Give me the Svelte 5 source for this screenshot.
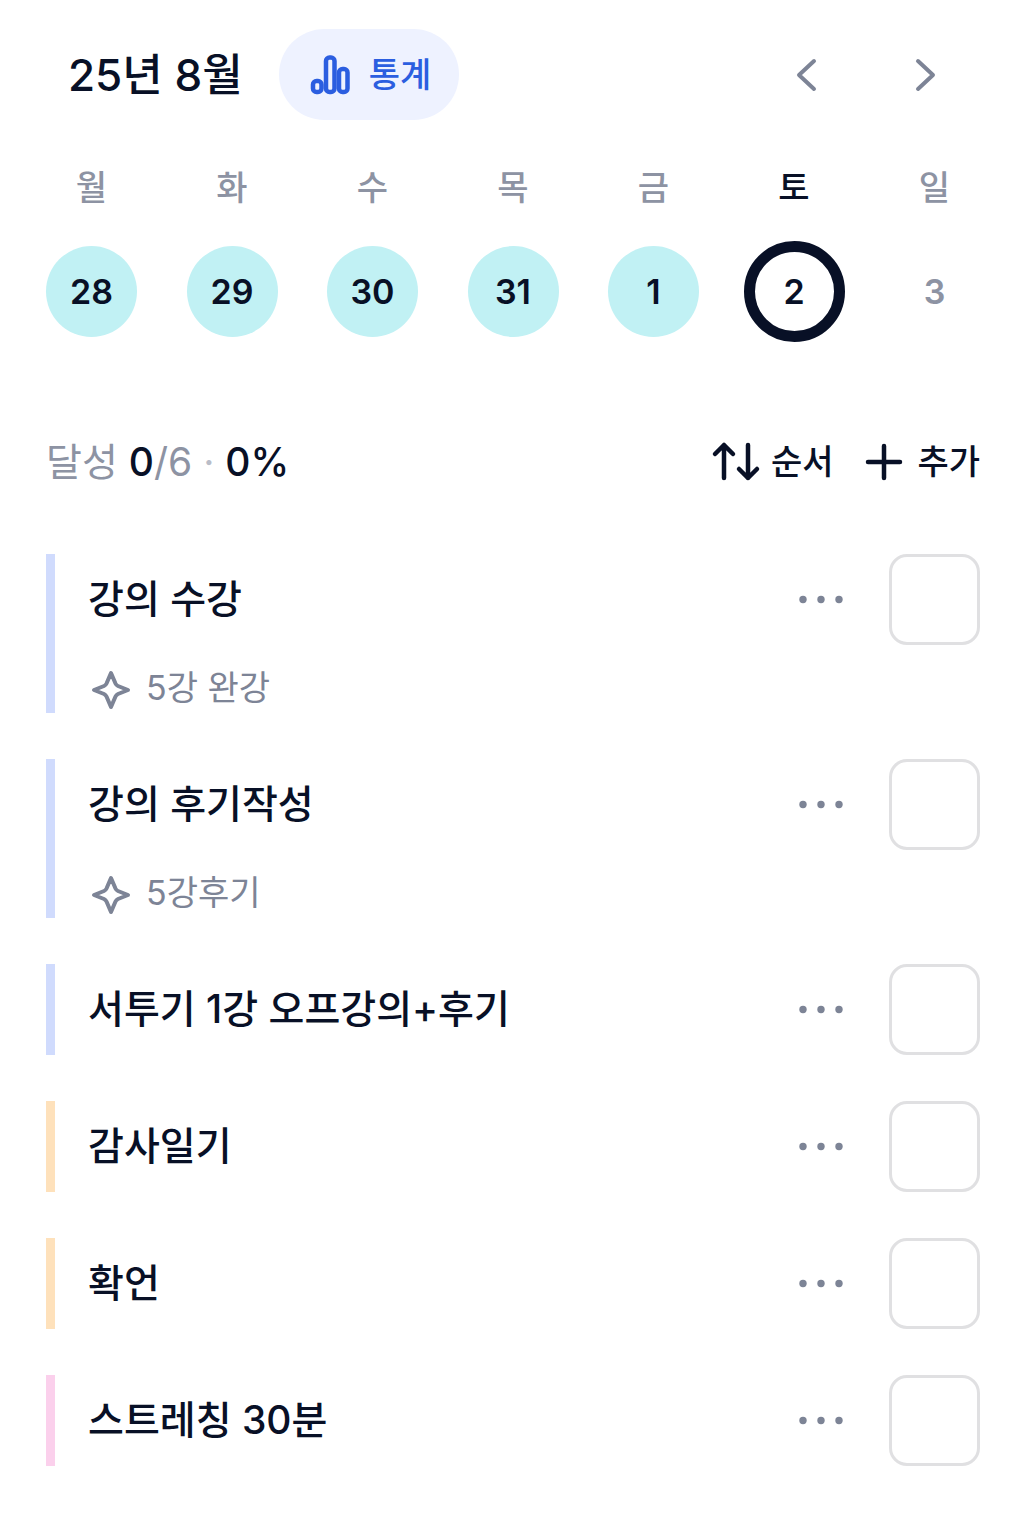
<script>
  const days = [
    { label: '월', date: 28, state: 'done' },
    { label: '화', date: 29, state: 'done' },
    { label: '수', date: 30, state: 'done' },
    { label: '목', date: 31, state: 'done' },
    { label: '금', date: 1, state: 'done' },
    { label: '토', date: 2, state: 'today' },
    { label: '일', date: 3, state: 'future' },
  ];

  let tasks = $state([
    { title: '강의 수강', note: '5강 완강', color: 'blue', done: false },
    { title: '강의 후기작성', note: '5강후기', color: 'blue', done: false },
    { title: '서투기 1강 오프강의+후기', color: 'blue', done: false },
    { title: '감사일기', color: 'orange', done: false },
    { title: '확언', color: 'orange', done: false },
    { title: '스트레칭 30분', color: 'pink', done: false },
  ]);

  let doneCount = $derived(tasks.filter((t) => t.done).length);
  let percent = $derived(Math.round((doneCount / tasks.length) * 100));
</script>

<main class="page">
  <header class="header">
    <h1>25년 8월</h1>
    <button class="stats" type="button">
      <svg class="icon" viewBox="0 0 46 46" aria-hidden="true">
        <rect x="6" y="29" width="8.5" height="11" rx="3.5" />
        <rect x="19" y="5.5" width="8.5" height="34.5" rx="3.5" />
        <rect x="32" y="17" width="8.5" height="23" rx="3.5" />
      </svg>
      통계
    </button>
    <nav class="arrows">
      <button type="button" aria-label="이전 주">
        <svg class="icon" viewBox="0 0 46 46" aria-hidden="true"><path d="M30 9 15 23 30 37" /></svg>
      </button>
      <button type="button" aria-label="다음 주">
        <svg class="icon" viewBox="0 0 46 46" aria-hidden="true"><path d="M15 9 30 23 15 37" /></svg>
      </button>
    </nav>
  </header>

  <section class="week">
    {#each days as day}
      <div class="day {day.state}">
        <span class="weekday">{day.label}</span>
        <button class="date" type="button">{day.date}</button>
      </div>
    {/each}
  </section>

  <section class="summary">
    <p>달성 <b>{doneCount}</b>/{tasks.length} <i>·</i> <b>{percent}%</b></p>
    <div class="tools">
      <button type="button">
        <svg class="icon" viewBox="0 0 46 46" aria-hidden="true">
          <path d="M9 39V6M0 15 9 6 18 15M33 6V39M24 30 33 39 42 30" />
        </svg>
        순서
      </button>
      <button type="button">
        <svg class="icon" viewBox="0 0 46 46" aria-hidden="true"><path d="M23 7V39M7 23H39" /></svg>
        추가
      </button>
    </div>
  </section>

  <ul class="tasks">
    {#each tasks as task, i}
      <li class="task {task.color}">
        <div class="body">
          <label class="title" for="task-{i}">{task.title}</label>
          {#if task.note}
            <p class="note">
              <svg class="icon" viewBox="0 0 46 46" aria-hidden="true">
                <path d="M23 6 27.5 16.5Q28.3 18.2 30 19L40 23 30 27Q28.3 27.8 27.5 29.5L23 40 18.5 29.5Q17.7 27.8 16 27L6 23 16 19Q17.7 18.2 18.5 16.5Z" />
              </svg>
              {task.note}
            </p>
          {/if}
        </div>
        <button class="more" type="button" aria-label="더보기">
          <svg viewBox="0 0 46 46" aria-hidden="true">
            <circle cx="5" cy="22.5" r="3.7" /><circle cx="23" cy="22.5" r="3.7" /><circle cx="41" cy="22.5" r="3.7" />
          </svg>
        </button>
        <input id="task-{i}" type="checkbox" bind:checked={task.done} />
      </li>
    {/each}
  </ul>
</main>

<style>
  :global(body) {
    margin: 0;
    background: #fff;
  }

  .page {
    padding: 29px 46px 51px;
    font-family: Inter, 'Noto Sans CJK KR', sans-serif;
    font-size: 34px;
    font-weight: 500;
    line-height: 46px;
    color: #081026;
  }

  h1,
  p,
  ul {
    margin: 0;
    padding: 0;
  }

  button {
    display: flex;
    align-items: center;
    justify-content: center;
    padding: 0;
    border: 0;
    background: none;
    font: inherit;
    color: inherit;
    cursor: pointer;
  }

  svg {
    display: block;
    flex: none;
    width: 46px;
    height: 46px;
    overflow: visible;
  }

  .icon {
    fill: none;
    stroke: currentColor;
    stroke-width: 4;
    stroke-linecap: round;
    stroke-linejoin: round;
  }

  .stats .icon,
  .tools .icon {
    stroke-width: 4.5;
  }

  .header {
    display: flex;
    align-items: center;
    height: 91px;
    padding: 0 9px 0 22px;
  }

  h1 {
    font-size: 44px;
    font-weight: 500;
  }

  .stats {
    gap: 16px;
    height: 91px;
    margin-left: 36px;
    padding: 0 28px;
    border-radius: 46px;
    background: #eef2ff;
    color: #2b5ee0;
  }

  .arrows {
    display: flex;
    gap: 28px;
    margin-left: auto;
    color: #7d8496;
  }

  .arrows button {
    width: 91px;
    height: 91px;
  }

  .week {
    display: flex;
    justify-content: space-between;
    margin-top: 45px;
  }

  .day {
    display: flex;
    flex-direction: column;
    align-items: center;
    gap: 35px;
    width: 91px;
  }

  .weekday {
    color: #8d93a3;
  }

  .date {
    flex: none;
    width: 91px;
    height: 91px;
    border-radius: 50%;
    font-weight: 600;
  }

  .done .date {
    background: #c1f1f4;
  }

  .today .weekday {
    color: #081026;
  }

  .today .date {
    width: 101px;
    height: 101px;
    margin: -5px;
    border: 11px solid #081026;
  }

  .future .date {
    color: #8d93a3;
  }

  .summary {
    display: flex;
    align-items: center;
    justify-content: space-between;
    margin-top: 102px;
  }

  .summary p {
    font-size: 39px;
    font-weight: 400;
    color: #8d93a3;
  }

  .summary b {
    font-weight: 500;
    color: #081026;
  }

  .summary i {
    font-style: normal;
    color: #b9bdc8;
  }

  .tools {
    display: flex;
    gap: 28px;
  }

  .tools button {
    gap: 10px;
  }

  .tasks {
    display: grid;
    gap: 46px;
    margin-top: 69px;
    list-style: none;
  }

  .task {
    display: flex;
    align-items: flex-start;
    border-left: 9px solid;
  }

  .blue {
    border-color: #d0dbfd;
  }

  .orange {
    border-color: #fee1bb;
  }

  .pink {
    border-color: #fbd0ec;
  }

  .body {
    flex: 1;
    padding-left: 33px;
  }

  .title {
    display: block;
    font-size: 39px;
    line-height: 90px;
  }

  .note {
    display: flex;
    gap: 12px;
    margin-top: 23px;
    font-weight: 400;
    line-height: 42px;
    color: #7d8496;
  }

  .more {
    width: 91px;
    height: 91px;
    margin-right: 23px;
  }

  .more svg {
    fill: #7d8496;
  }

  input {
    appearance: none;
    flex: none;
    box-sizing: border-box;
    width: 91px;
    height: 91px;
    margin: 0;
    border: 3px solid #e0e0e2;
    border-radius: 18px;
    background: #fff;
    cursor: pointer;
  }

  input:checked {
    border-color: #c1f1f4;
    background: #c1f1f4;
  }
</style>
